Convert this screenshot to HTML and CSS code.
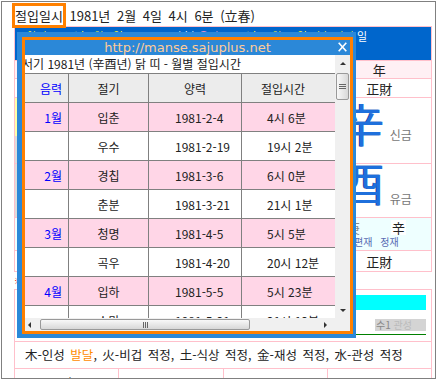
FILE: index.html
```html
<!DOCTYPE html>
<html lang="ko">
<head>
  <meta charset="UTF-8">
  <meta name="viewport" content="width=device-width, initial-scale=1.0">
  <link rel="stylesheet" href="styles.css">
</head>
<body>
  <div class="frame">
    <div class="title-line"><span class="mark">절입일시</span> 1981년 2월 4일 4시 6분 (立春)</div>

    <div class="panel">
      <div class="banner">
        <p class="banner-line">양력 1981년 2월 4일 04시 06분 <span class="white">(水)</span> <span class="pink">음력</span> 1980년 12월 30일 입춘 절입 <span class="white">일</span></p>
      </div>

      <!-- only the year pillar shows beside the popup -->
      <div class="pillars">
        <div class="head"></div>
        <div class="head"></div>
        <div class="head"></div>
        <div class="head">年</div>

        <div></div>
        <div></div>
        <div></div>
        <div>正財</div>

        <div class="stem first"></div>
        <div class="stem"></div>
        <div class="stem"></div>
        <div class="stem"><span class="big">辛</span><span class="sub">신금</span></div>

        <div class="branch first"></div>
        <div class="branch"></div>
        <div class="branch"></div>
        <div class="branch"><span class="big">酉</span><span class="sub">유금</span></div>

        <div class="hidden"></div>
        <div class="hidden"></div>
        <div class="hidden"></div>
        <div class="hidden"><p class="hs-chars"><span class="hs-dim">庚</span><span class="hs-main">辛</span></p><p class="hs-names">편재 정재</p></div>

        <div></div>
        <div></div>
        <div></div>
        <div>正財</div>
      </div>

      <div class="note">※</div>

      <div class="chart">
        <div class="chart-bar"></div>
        <div class="chart-label"><span class="strong">수1</span> 관성</div>
        <div class="chart-axis"></div>
      </div>

      <div class="summary">木-인성 <span class="hot">발달</span>, 火-비겁 적정, 土-식상 적정, 金-재성 적정, 水-관성 적정</div>

      <div class="luck">
        <div>인</div>
        <div>토</div>
        <div>토</div>
        <div>丁</div>
      </div>
    </div>
  </div>

  <div class="popup">
    <div class="popup-inner">
      <div class="popup-title">
        http://manse.sajuplus.net
        <svg class="popup-close" width="9" height="10" viewBox="0 0 9 10">
          <path d="M0.7 0.7 L8.3 9.3 M8.3 0.7 L0.7 9.3" stroke="#fff" stroke-width="1.6" fill="none"/>
        </svg>
      </div>

      <div class="popup-body">
        <div class="popup-view">
          <div class="popup-scroll">
            <p class="caption">서기 1981년 (辛酉년) 닭 띠 - 월별 절입시간</p>
            <table class="term-table">
              <tr>
                <th class="lunar c1">음력</th>
                <th class="c2">절기</th>
                <th class="c3">양력</th>
                <th class="c4">절입시간</th>
              </tr>
              <tr class="pink"><td class="lunar">1월</td><td>입춘</td><td class="solar">1981-2-4</td><td class="time">4시 6분</td></tr>
              <tr><td class="lunar"></td><td>우수</td><td class="solar">1981-2-19</td><td class="time">19시 2분</td></tr>
              <tr class="pink"><td class="lunar">2월</td><td>경칩</td><td class="solar">1981-3-6</td><td class="time">6시 0분</td></tr>
              <tr><td class="lunar"></td><td>춘분</td><td class="solar">1981-3-21</td><td class="time">21시 1분</td></tr>
              <tr class="pink"><td class="lunar">3월</td><td>청명</td><td class="solar">1981-4-5</td><td class="time">5시 5분</td></tr>
              <tr><td class="lunar"></td><td>곡우</td><td class="solar">1981-4-20</td><td class="time">20시 12분</td></tr>
              <tr class="pink"><td class="lunar">4월</td><td>입하</td><td class="solar">1981-5-5</td><td class="time">5시 23분</td></tr>
              <tr><td class="lunar"></td><td>소만</td><td class="solar">1981-5-21</td><td class="time">21시 12분</td></tr>
            </table>
          </div>
        </div>

        <div class="vbar">
          <span class="arrow arrow-up"></span>
          <span class="vthumb"><span class="grip-h"></span></span>
          <span class="arrow arrow-down"></span>
        </div>

        <div class="hbar">
          <span class="arrow arrow-left"></span>
          <span class="hthumb"><span class="grip-v"></span></span>
          <span class="arrow arrow-right"></span>
        </div>

        <div class="corner"></div>
      </div>
    </div>
  </div>
</body>
</html>
```

FILE: styles.css
```css
:root {
  --pink-line: #ffc0cb;
  --popup-blue: #2b88d8;
  --mark-orange: #ff8000;
  --grid-gray: #808080;
  --bar-bg: #f0f0f0;
}

* {
  box-sizing: border-box;
}

body {
  margin: 0;
  background: #fff;
  color: #222;
  font-family: "Noto Sans CJK KR", "Noto Sans", sans-serif;
  font-size: 12px;
}

p {
  margin: 0;
}

.frame {
  width: 435px;
  height: 378px;
  margin: 1px;
  padding: 0 3px 0 12px;
  border: 1px solid var(--grid-gray);
  overflow: hidden;
}

.title-line {
  height: 24px;
  padding: 3px 0 0 1px;
  font-size: 13px;
  line-height: 21px;
  word-spacing: 3px;
  white-space: nowrap;
}

.mark {
  outline: 3px solid var(--mark-orange);
}

/* blue banner behind the popup */
.banner {
  height: 34px;
  border: 1px solid var(--pink-line);
  border-bottom: 0;
  background: #0066cc;
  overflow: hidden;
}

.banner-line {
  padding: 2px 64px 0 0;
  text-align: right;
  font-size: 11px;
  line-height: 14px;
  color: #ffff33;
  white-space: nowrap;
}

.banner-line .white {
  color: #fff;
}

.banner-line .pink {
  color: #ff99cc;
}

/* four pillars */
.pillars {
  display: grid;
  grid-template-columns: repeat(4, 1fr);
  grid-template-rows: 17px 18px 65px 53px 32px 20px;
  gap: 1px;
  background: var(--pink-line);
  border: 1px solid var(--pink-line);
}

.pillars > div {
  display: flex;
  align-items: center;
  justify-content: center;
  background: #fff;
  font-size: 13px;
  color: #222;
  overflow: hidden;
}

.pillars > .head {
  background: #fff0f4;
}

.pillars > .stem,
.pillars > .branch {
  align-items: flex-start;
  justify-content: flex-start;
  padding-left: 11px;
}

.pillars > .stem {
  padding-top: 1px;
}

.pillars > .branch {
  padding-top: 0;
}

.pillars > .stem.first {
  background: linear-gradient(#ffffa8 38px, #dcdcdc 38px);
}

.pillars > .branch.first {
  background: #dcdcdc;
}

.big {
  font-size: 46px;
  line-height: 46px;
  color: #1f70dc;
  text-shadow: -1px 0 0 #163f99;
}

.branch .big {
  margin-top: -6px;
}

.sub {
  margin: 27px 0 0 5px;
  font-size: 12px;
  line-height: 17px;
  color: #777;
}

.branch .sub {
  margin-top: 26px;
}

.pillars > .hidden {
  flex-direction: column;
  justify-content: flex-start;
  padding: 2px 6px 0 0;
  background: #eeffff;
}

.hs-chars {
  display: flex;
  gap: 31px;
  font-size: 13px;
  line-height: 15px;
}

.hs-dim {
  color: #888;
}

.hs-main {
  padding: 0 1px;
  background: #fff;
}

.hs-names {
  margin-top: 1px;
  font-size: 10px;
  line-height: 12px;
  word-spacing: 5px;
  color: #5a6bb3;
}

.note {
  height: 17px;
  font-size: 8px;
  line-height: 17px;
  color: #e00000;
}

/* element balance chart */
.chart {
  height: 53px;
  padding: 5px 5px 0;
  border: 1px solid var(--pink-line);
}

.chart-bar {
  height: 15px;
  background: #00ffff;
}

.chart-label {
  width: 51px;
  height: 12px;
  margin: 9px 0 0 auto;
  padding-left: 1px;
  background: #d4d4d4;
  font-size: 10px;
  line-height: 12px;
  color: #bbb;
  white-space: nowrap;
}

.chart-label .strong {
  color: #888;
}

.chart-axis {
  height: 1px;
  margin-top: 3px;
  background: #008000;
}

.summary {
  height: 27px;
  padding-left: 10px;
  border: 1px solid var(--pink-line);
  border-top: 0;
  font-size: 12.5px;
  line-height: 26px;
  word-spacing: 2px;
  white-space: nowrap;
}

.summary .hot {
  color: #ff8c00;
}

.luck {
  display: grid;
  grid-template-columns: repeat(4, 1fr);
  gap: 1px;
  height: 30px;
  background: var(--pink-line);
  border: 1px solid var(--pink-line);
  border-top: 0;
}

.luck > div {
  padding-top: 5px;
  background: #fff;
  text-align: center;
  font-size: 12px;
}

/* popup window */
.popup {
  position: absolute;
  left: 17px;
  top: 32px;
  width: 339px;
  height: 306px;
  padding: 5px 3px 4px 5px;
  background: var(--popup-blue);
}

.popup-inner {
  display: flex;
  flex-direction: column;
  height: 100%;
  border: 3px solid var(--mark-orange);
}

.popup-title {
  position: relative;
  height: 15px;
  text-align: center;
  font-family: "DejaVu Sans", sans-serif;
  font-size: 13px;
  line-height: 15px;
  color: #ffcc99;
  white-space: nowrap;
}

.popup-close {
  position: absolute;
  right: 3px;
  top: 2px;
}

.popup-body {
  flex: 1;
  display: grid;
  grid-template-columns: 1fr 15px;
  grid-template-rows: 1fr 13px;
  background: #fff;
  overflow: hidden;
}

.popup-view {
  overflow: hidden;
}

.popup-scroll {
  margin-left: -3px;
}

.caption {
  height: 18px;
  font-size: 12px;
  line-height: 18px;
  white-space: nowrap;
}

.term-table {
  width: 316px;
  table-layout: fixed;
  border-spacing: 1px;
  background: var(--grid-gray);
  font-size: 12px;
}

.term-table th,
.term-table td {
  height: 28px;
  padding: 0;
  background: #fff;
  font-weight: normal;
  text-align: center;
  color: #222;
  white-space: nowrap;
}

.term-table th {
  background: #ececec;
}

.term-table tr.pink td {
  background: #ffd6e7;
}

.term-table .c1 { width: 45px; }
.term-table .c2 { width: 79px; }
.term-table .c3 { width: 92px; }
.term-table .c4 {
  width: 95px;
  padding-left: 19px;
  text-align: left;
}

.term-table .lunar {
  padding-right: 6px;
  text-align: right;
  color: #0000ff;
}

.term-table .solar {
  padding-left: 26px;
  text-align: left;
}

.term-table .time {
  padding-left: 25px;
  text-align: left;
}

/* scrollbars */
.vbar,
.hbar,
.corner {
  background: var(--bar-bg);
}

.vbar {
  display: flex;
  flex-direction: column;
  align-items: center;
}

.hbar {
  display: flex;
  align-items: center;
  padding: 0 8px 0 3px;
}

.arrow {
  width: 0;
  height: 0;
  border: 3px solid transparent;
}

.arrow-up {
  margin-top: 7px;
  border-top-width: 0;
  border-bottom-color: #333;
}

.arrow-down {
  margin: auto 0 6px;
  border-bottom-width: 0;
  border-top-color: #333;
}

.arrow-left {
  border-left-width: 0;
  border-right-color: #333;
}

.arrow-right {
  margin-left: auto;
  border-right-width: 0;
  border-left-color: #333;
}

.vthumb,
.hthumb {
  display: flex;
  align-items: center;
  justify-content: center;
  border: 1px solid #999;
  border-radius: 2px;
}

.vthumb {
  width: 13px;
  height: 27px;
  margin-top: 8px;
  background: linear-gradient(to right, #f8f8f8, #d8d8d8);
}

.hthumb {
  width: 210px;
  height: 11px;
  margin-left: 9px;
  background: linear-gradient(#f8f8f8, #d8d8d8);
}

.grip-h {
  width: 7px;
  height: 5px;
  border-top: 1px solid #666;
  border-bottom: 1px solid #666;
  background: linear-gradient(#666, #666) center / 100% 1px no-repeat;
}

.grip-v {
  width: 5px;
  height: 6px;
  border-left: 1px solid #666;
  border-right: 1px solid #666;
  background: linear-gradient(#666, #666) center / 1px 100% no-repeat;
}
```
